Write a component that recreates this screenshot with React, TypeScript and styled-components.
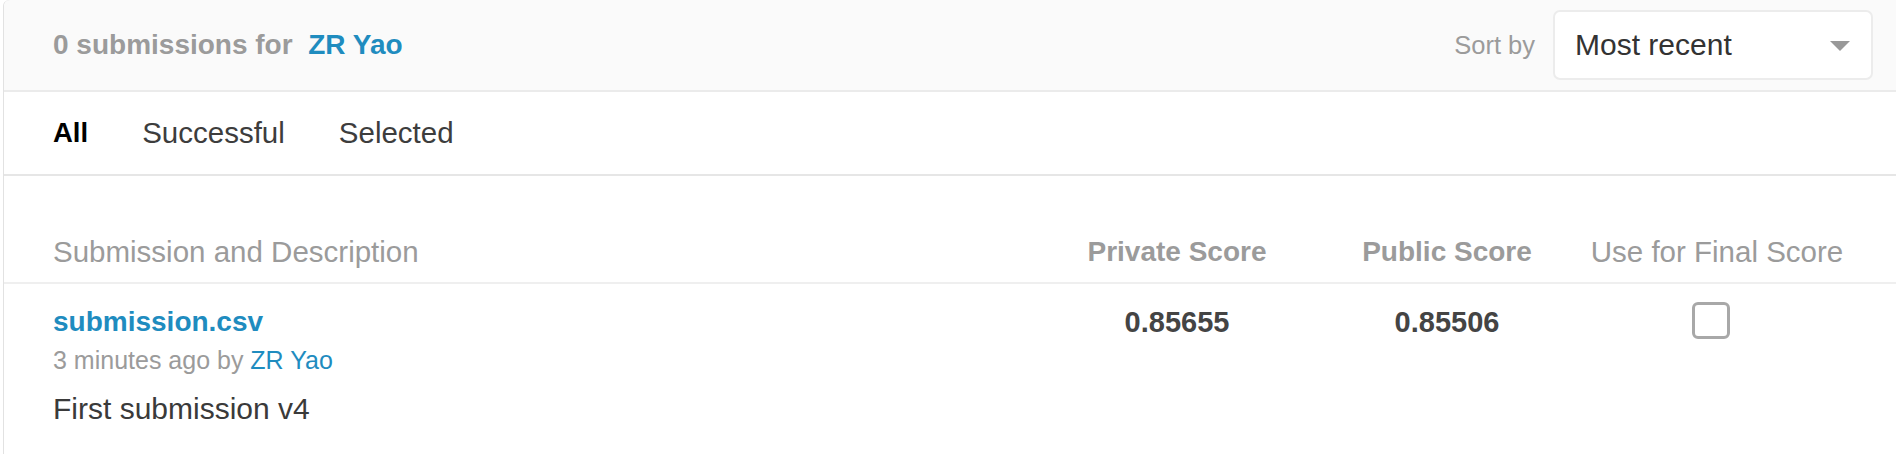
import React from "react";
import styled, { createGlobalStyle } from "styled-components";

const Global = createGlobalStyle`
  html, body { margin: 0; padding: 0; background: #ffffff; }
  body { font-family: "Liberation Sans", Arial, sans-serif; overflow: hidden; }
  * { box-sizing: border-box; }
`;

const Card = styled.div`
  margin-left: 3px;
  width: calc(100vw - 3px);
  border-left: 1px solid #e2e2e2;
  border-top: 1px solid #e8e8e8;
  border-top-left-radius: 6px;
  background: #fff;
  min-height: 460px;
`;

const Header = styled.div`
  display: flex;
  align-items: center;
  justify-content: space-between;
  height: 92px;
  margin-top: -1px;
  padding: 0 23px 0 49px;
  background: #fafafa;
  border-bottom: 2px solid #ebebeb;
  border-top-left-radius: 6px;
`;

const Title = styled.div`
  font-size: 28px;
  font-weight: 700;
  color: #9b9b9b;
  line-height: 34px;
  margin-top: 0px;
`;

const Link = styled.a<{ $bold?: boolean }>`
  color: #1f8cbf;
  text-decoration: none;
  font-weight: ${(p) => (p.$bold ? 700 : 400)};
`;

const SortGroup = styled.div`
  display: flex;
  align-items: center;
  gap: 18px;
`;

const SortLabel = styled.span`
  font-size: 25.5px;
  color: #9b9b9b;
`;

const Select = styled.div`
  width: 320px;
  height: 70px;
  margin-top: -1px;
  background: #fff;
  border: 2px solid #ececec;
  border-radius: 7px;
  display: flex;
  align-items: center;
  justify-content: space-between;
  padding: 0 21px 0 20px;
  font-size: 30px;
  color: #333;
`;

const Caret = styled.span`
  width: 0;
  height: 0;
  border-left: 10px solid transparent;
  border-right: 10px solid transparent;
  border-top: 10px solid #999;
  margin-top: 2px;
`;

const Tabs = styled.div`
  display: flex;
  align-items: center;
  gap: 54px;
  height: 84px;
  padding-left: 49px;
  border-bottom: 2px solid #e6e6e6;
`;

const Tab = styled.span<{ $active?: boolean }>`
  font-size: ${(p) => (p.$active ? "27.5px" : "29.5px")};
  font-weight: ${(p) => (p.$active ? 700 : 400)};
  color: ${(p) => (p.$active ? "#000" : "#3d3d3d")};
  line-height: 36px;
`;

const Grid = styled.div`
  display: grid;
  grid-template-columns: 1fr 270px 270px 270px;
  padding: 0 44px 0 49px;
`;

const HeadRow = styled(Grid)`
  padding-top: 58px;
  padding-bottom: 12px;
  border-bottom: 2px solid #efefef;
`;

const HeadCell = styled.div<{ $bold?: boolean; $align?: string }>`
  font-size: ${(p) => (p.$bold ? "28px" : "29.5px")};
  font-weight: ${(p) => (p.$bold ? 700 : 400)};
  color: #9b9b9b;
  line-height: 36px;
  text-align: ${(p) => p.$align || "center"};
`;

const BodyRow = styled(Grid)`
  padding-top: 21px;
`;

const SubCell = styled.div`
  display: flex;
  flex-direction: column;
`;

const FileName = styled(Link)`
  font-size: 28px;
  line-height: 34px;
`;

const Meta = styled.div`
  font-size: 25px;
  line-height: 30px;
  color: #9b9b9b;
  margin-top: 6px;
`;

const Desc = styled.div`
  font-size: 30px;
  line-height: 36px;
  color: #3a3a3a;
  margin-top: 16px;
`;

const Score = styled.div`
  font-size: 29px;
  font-weight: 700;
  color: #444;
  line-height: 34px;
  text-align: center;
`;

const CheckCell = styled.div`
  display: flex;
  justify-content: center;
  padding-right: 12px;
`;

const Checkbox = styled.span`
  width: 38px;
  height: 37px;
  margin-top: -3px;
  border: 3px solid #a8a8a8;
  border-radius: 6px;
  background: #fff;
`;

export default function App() {
  return (
    <>
      <Global />
      <Card>
        <Header>
          <Title>
            0 submissions for&nbsp;&nbsp;<Link $bold href="#">ZR Yao</Link>
          </Title>
          <SortGroup>
            <SortLabel>Sort by</SortLabel>
            <Select>
              <span>Most recent</span>
              <Caret />
            </Select>
          </SortGroup>
        </Header>
        <Tabs>
          <Tab $active>All</Tab>
          <Tab>Successful</Tab>
          <Tab>Selected</Tab>
        </Tabs>
        <HeadRow>
          <HeadCell $align="left">Submission and Description</HeadCell>
          <HeadCell $bold>Private Score</HeadCell>
          <HeadCell $bold>Public Score</HeadCell>
          <HeadCell>Use for Final Score</HeadCell>
        </HeadRow>
        <BodyRow>
          <SubCell>
            <FileName $bold href="#">submission.csv</FileName>
            <Meta>
              3 minutes ago by <Link href="#">ZR Yao</Link>
            </Meta>
            <Desc>First submission v4</Desc>
          </SubCell>
          <Score>0.85655</Score>
          <Score>0.85506</Score>
          <CheckCell>
            <Checkbox />
          </CheckCell>
        </BodyRow>
      </Card>
    </>
  );
}
